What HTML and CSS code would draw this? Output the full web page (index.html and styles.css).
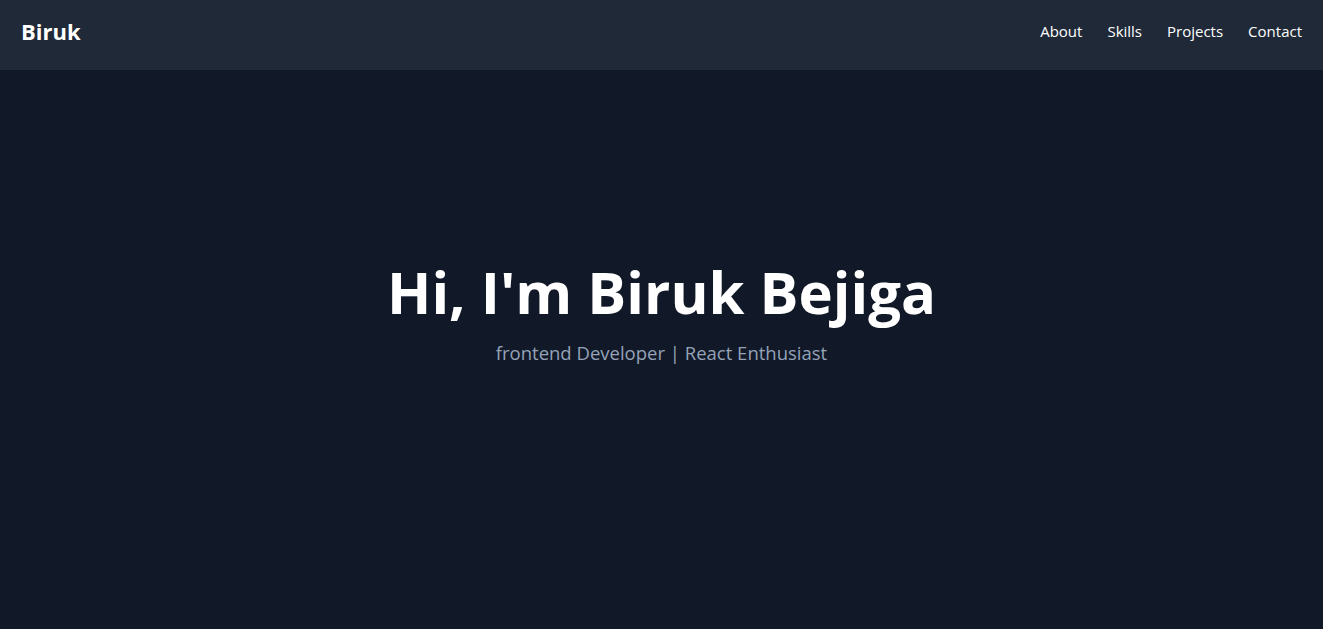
FILE: index.html
```html
<!DOCTYPE html>
<html lang="en">
<head>
<meta charset="utf-8">
<title>Biruk</title>
<link rel="stylesheet" href="styles.css">
</head>
<body>
<header class="nav">
  <div class="brand">Biruk</div>
  <nav class="links">
    <a href="#about">About</a>
    <a href="#skills">Skills</a>
    <a href="#projects">Projects</a>
    <a href="#contact">Contact</a>
  </nav>
</header>
<main class="hero">
  <h1 class="title">Hi, I'm Biruk Bejiga</h1>
  <p class="subtitle">frontend Developer | React Enthusiast</p>
</main>
</body>
</html>
```

FILE: styles.css
```css
* { box-sizing: border-box; }
html, body { margin: 0; padding: 0; }
body {
  background: #111827;
  color: #ffffff;
  font-family: "Open Sans", "Noto Sans", sans-serif;
}
.nav {
  position: fixed;
  top: 0; left: 0; right: 0;
  height: 70px;
  background: #1f2937;
  display: flex;
  align-items: center;
  justify-content: space-between;
  padding: 0 21px 9px;
}
.brand {
  font-size: 22px;
  font-weight: 700;
}
.links {
  display: flex;
  gap: 25px;
}
.links a {
  color: #ffffff;
  text-decoration: none;
  font-size: 15px;
}
.hero {
  height: 100vh;
  display: flex;
  flex-direction: column;
  align-items: center;
  justify-content: center;
}
.title {
  margin: 0 0 18px;
  font-size: 58px;
  line-height: 1;
  font-weight: 700;
}
.subtitle {
  margin: 0;
  font-size: 18.5px;
  line-height: 28px;
  color: #94a3b8;
}
```
